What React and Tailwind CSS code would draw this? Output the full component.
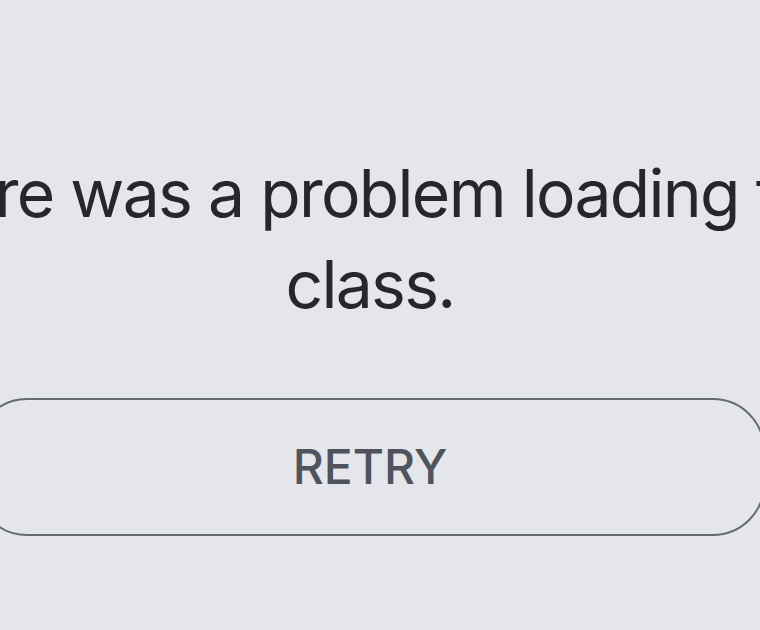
export default function App() {
  return (
    <div
      className="w-[760px] h-[630px] overflow-hidden bg-[#e4e6eb]"
      style={{ fontFamily: 'Inter, "Noto Sans", sans-serif' }}
    >
      <div className="w-[1200px] ml-[-230px] pt-[148px] flex flex-col items-center">
        <p className="text-center text-[66px] leading-[91px] text-[#25272b] tracking-[-1.7px]">
          There was a problem loading this
          <br />
          class.
        </p>
        <button className="mt-[68px] w-[790px] h-[138px] rounded-[52px] border-2 border-[#666a73] flex items-center justify-center text-[48px] font-medium tracking-[0px] text-[#50535b]">
          RETRY
        </button>
      </div>
    </div>
  );
}
